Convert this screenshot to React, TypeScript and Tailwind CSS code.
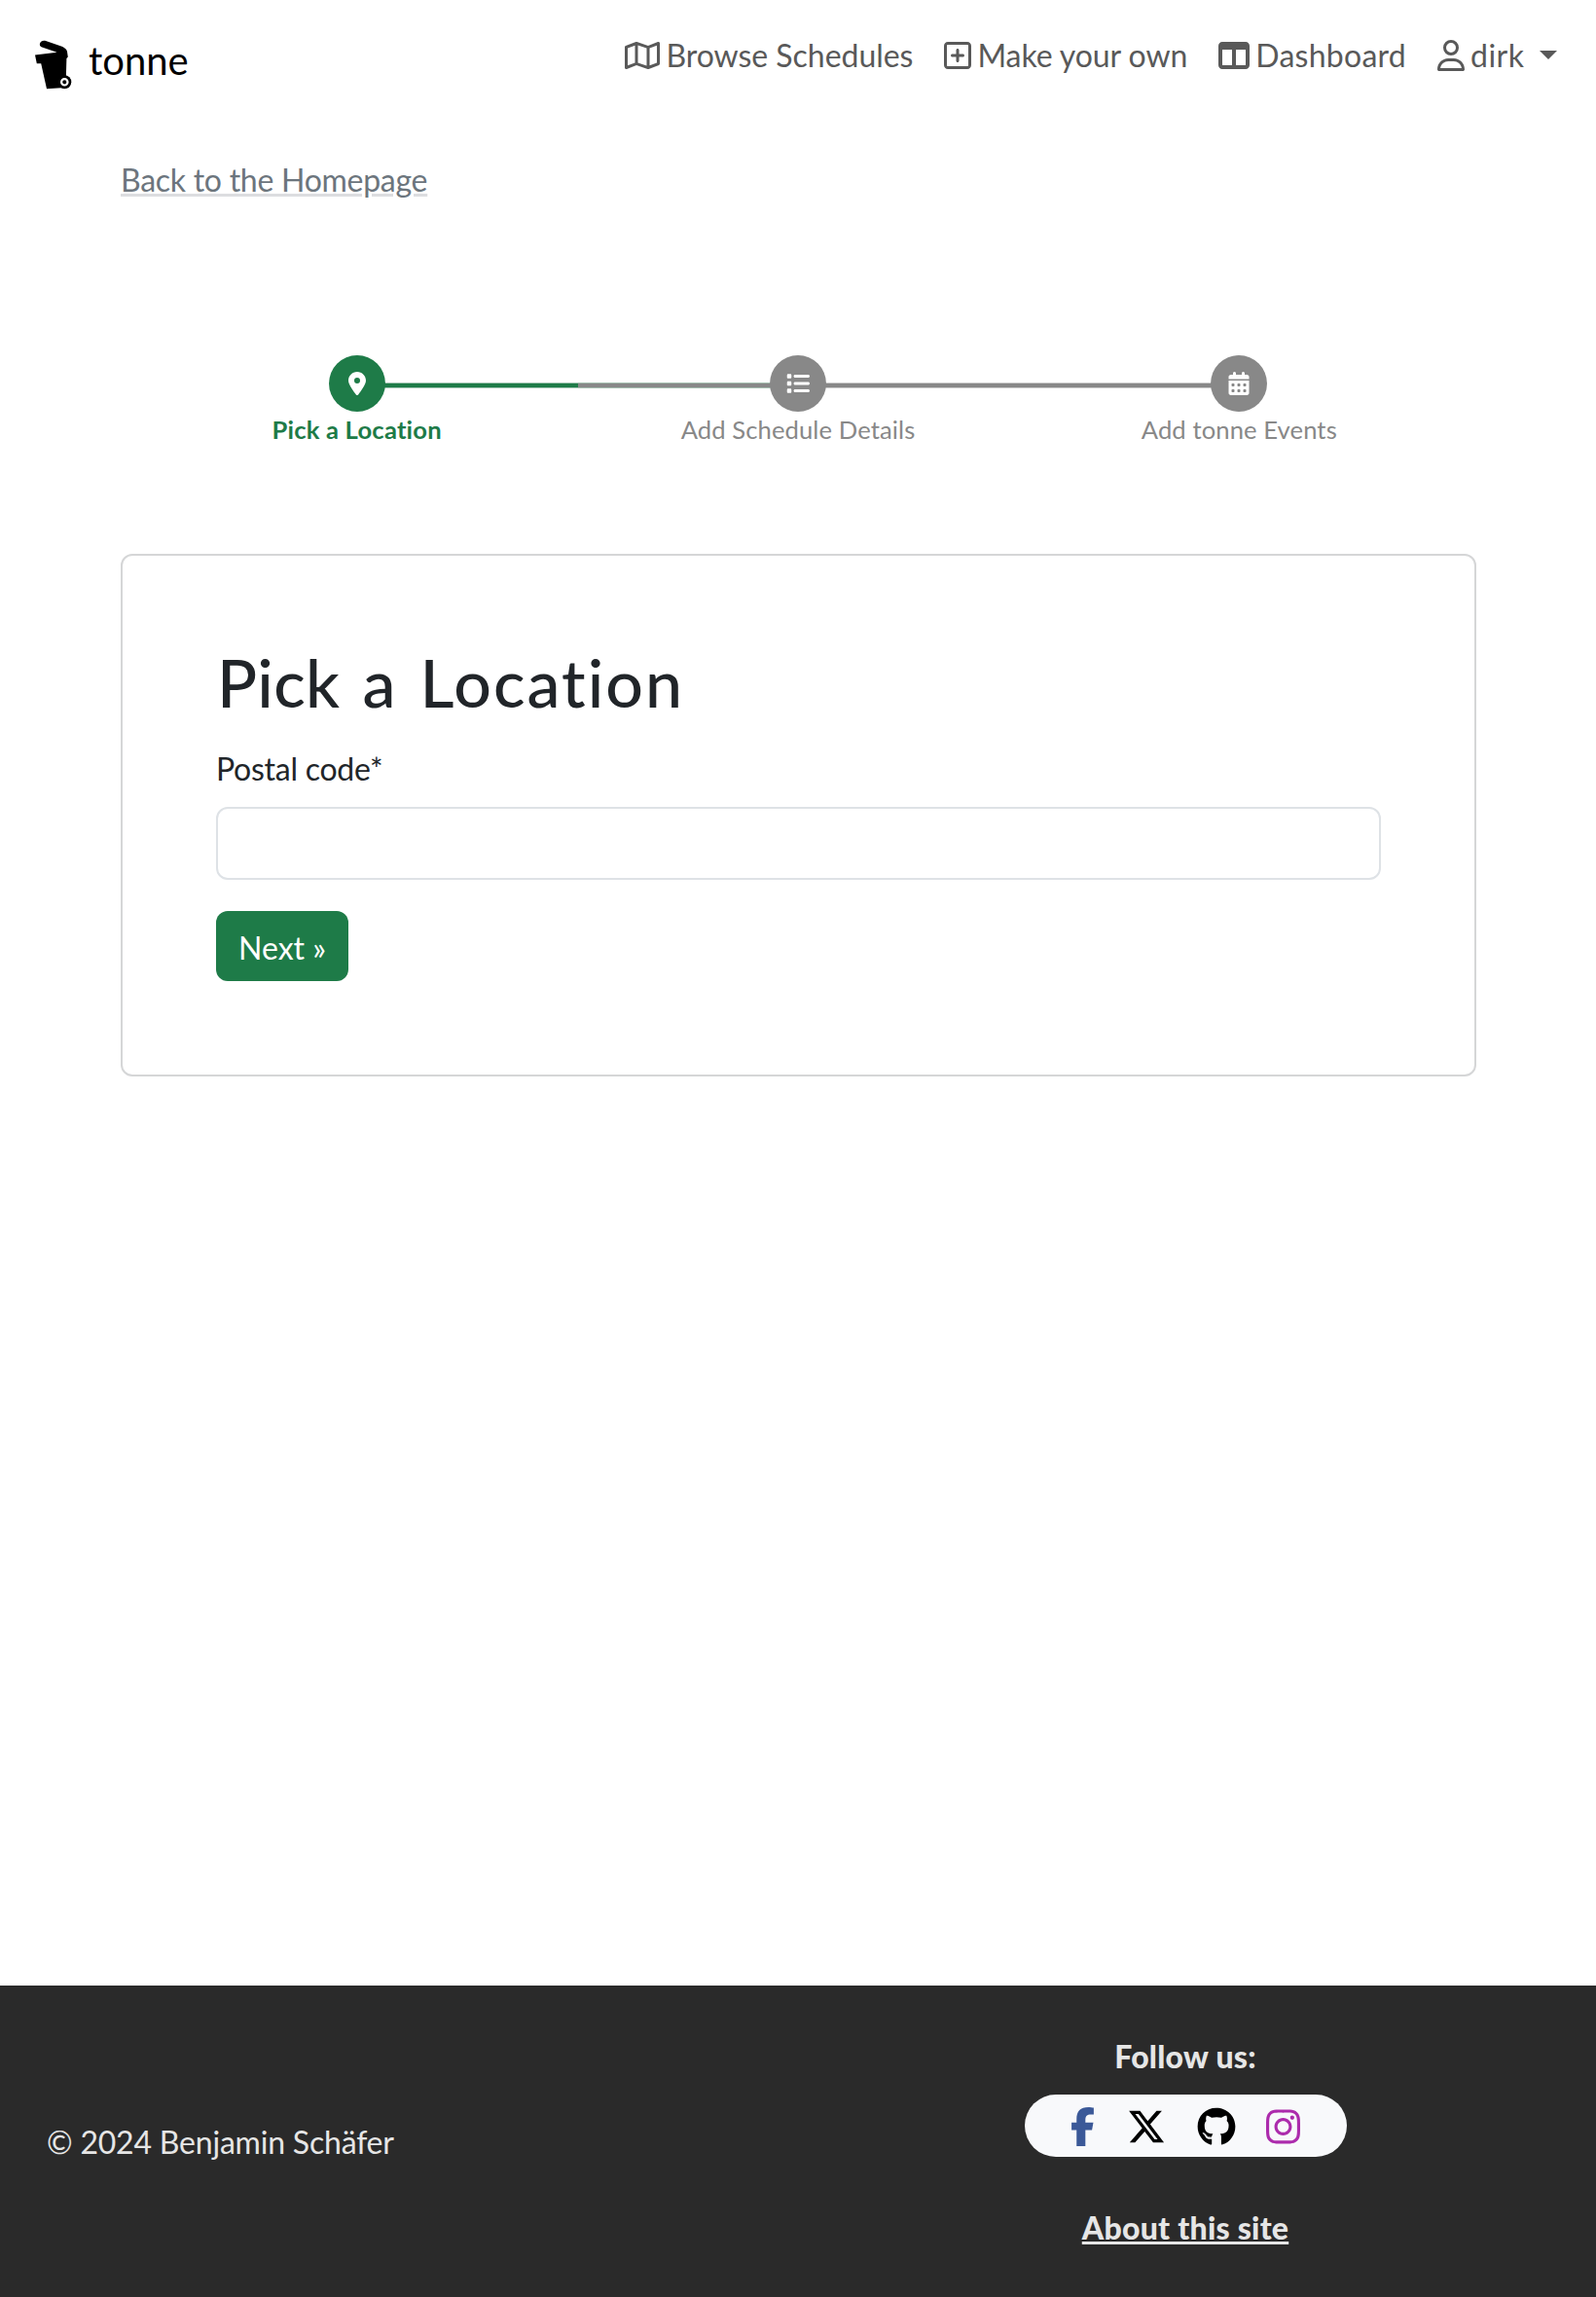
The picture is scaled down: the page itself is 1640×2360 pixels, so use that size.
import type { ReactNode } from "react";
import {
  FaCalendarDays,
  FaFacebookF,
  FaGithub,
  FaInstagram,
  FaList,
  FaLocationDot,
  FaRegMap,
  FaRegSquarePlus,
  FaRegUser,
  FaTableColumns,
  FaXTwitter,
} from "react-icons/fa6";

function BinLogo() {
  return (
    <svg viewBox="0 0 38 52" className="h-[52px] w-[38px]" fill="#000">
      <path d="M5 3.6C5.600 1 8.500.2 11 .9L25.500 6C29.500 7.400 32.500 9 33 12L33.800 17.500L32.400 19L31.800 40L27 49.300L12 50.300L6.200 24.200L1.800 24.200L0 15.500L22.500 12.800L6.500 7.200C5 6.600 4.600 5.200 5 3.600Z" />
      <circle cx="30.300" cy="43.300" r="7" />
      <circle cx="30.300" cy="43.300" r="3.200" fill="none" stroke="#fff" strokeWidth="2.200" />
    </svg>
  );
}

function NavLink({ icon, children }: { icon: ReactNode; children: ReactNode }) {
  return (
    <a className="flex items-center gap-[6px] px-4 text-[32px] leading-[48px] text-[#595959]">
      {icon}
      {children}
    </a>
  );
}

function Step({ icon, label, active }: { icon: ReactNode; label: string; active?: boolean }) {
  return (
    <div className="flex flex-1 flex-col items-center">
      <div
        className={`relative z-10 flex size-[58px] items-center justify-center rounded-full text-[24px] text-white ${
          active ? "bg-[#1e7b48]" : "bg-[#888888]"
        }`}
      >
        {icon}
      </div>
      <div
        className={`text-[25.6px] leading-[36px] ${
          active ? "font-bold tracking-[0.2px] text-[#1e7b48]" : "tracking-[0.1px] text-[#888888]"
        }`}
      >
        {label}
      </div>
    </div>
  );
}

export default function App() {
  return (
    <div className="flex h-[2360px] w-[1640px] flex-col bg-white font-['Lato',sans-serif]">
      <header className="flex h-[122px] items-start justify-between pt-[33px] pr-6 pl-9">
        <a className="flex items-start gap-[17px] text-[40px] leading-[58px] text-black">
          <span className="pt-2">
            <BinLogo />
          </span>
          tonne
        </a>
        <nav className="flex">
          <NavLink icon={<FaRegMap className="h-8 w-9" />}>
            <span className="tracking-[-0.03px]">Browse Schedules</span>
          </NavLink>
          <NavLink icon={<FaRegSquarePlus className="h-8 w-7" />}>
            <span className="tracking-[-0.08px]">Make your own</span>
          </NavLink>
          <NavLink icon={<FaTableColumns className="size-8" />}>
            <span className="tracking-[0.25px]">Dashboard</span>
          </NavLink>
          <NavLink icon={<FaRegUser className="h-8 w-7" />}>
            <span className="tracking-[0.5px]">dirk</span>
            <span className="mb-[2px] ml-[9.500px] border-x-[9.6px] border-t-[9.6px] border-x-transparent border-t-[#595959]" />
          </NavLink>
        </nav>
      </header>

      <main className="flex flex-1 flex-col pt-[39px] pr-[123px] pl-[124px]">
        <a className="self-start text-[32px] leading-[48px] tracking-[-0.27px] text-[#6c757d] underline decoration-[#dcdde0]">
          Back to the Homepage
        </a>

        <div className="relative mt-[156px] mr-[17px] ml-4 flex">
          <div className="absolute top-[28px] right-[227px] left-[227px] flex h-[6px]">
            <div className="w-1/4 border-y border-[#9fc4b0] bg-[#1e7b48]" />
            <div className="w-1/4 border-y border-[#a3bdae] bg-[#888888]" />
            <div className="w-1/2 border-y border-[#c9c9c9] bg-[#888888]" />
          </div>
          <Step active icon={<FaLocationDot />} label="Pick a Location" />
          <Step icon={<FaList />} label="Add Schedule Details" />
          <Step icon={<FaCalendarDays />} label="Add tonne Events" />
        </div>

        <section className="mt-[110px] h-[537px] rounded-[12px] border-2 border-[#d5d6d7] px-24 pt-[90px]">
          <h1 className="ml-px text-[68px] leading-[80px] font-medium tracking-[2px] text-[#212529] [word-spacing:4px]">
            <span className="tracking-[0.3px]">Pick</span> a Location
          </h1>
          <label className="mt-[25px] block text-[32px] leading-[48px] tracking-[-0.25px] text-[#212529]">
            Postal code*
          </label>
          <input className="mt-[15px] block h-[75px] w-full rounded-[12px] border-2 border-[#dee2e6] bg-white" />
          <button className="mt-8 block h-[72px] w-[136px] rounded-[12px] bg-[#1e7b48] pt-1 text-[32px] leading-[48px] text-white">
            Next »
          </button>
        </section>
      </main>

      <footer className="flex h-80 items-center bg-[#2a2a2a] px-12 text-[32px] leading-[48px] text-[#e6e6e6]">
        <div className="w-[748px] pt-[2px] tracking-[-0.2px]">© 2024 Benjamin Schäfer</div>
        <div className="-mr-12 flex flex-1 flex-col items-center pt-[2px] font-black tracking-[0.24px]">
          <div>Follow us:</div>
          <div className="mt-[15px] flex h-16 w-[331px] items-center rounded-full bg-[#f8f9fb] pt-[2px] text-[40px]">
            <FaFacebookF className="ml-[47px] h-10 w-[25px] text-[#3b5998]" />
            <FaXTwitter className="ml-[33px] text-black" />
            <FaGithub className="ml-[32px] text-black" />
            <FaInstagram className="ml-[31px] h-10 w-[35px] text-[#ac2bac]" />
          </div>
          <a className="mt-[49px] underline">About this site</a>
        </div>
      </footer>
    </div>
  );
}
